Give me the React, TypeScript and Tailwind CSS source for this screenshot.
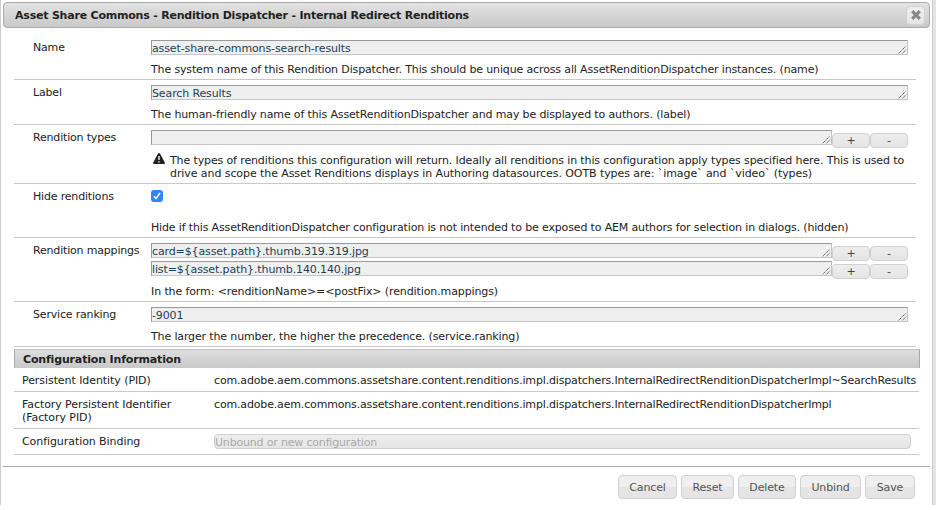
import React from "react";

function Grip() {
  return (
    <svg width="9" height="9" viewBox="0 0 9 9" className="absolute right-0 bottom-0" stroke="#555" strokeWidth="1" strokeDasharray="1.4 .6" fill="none">
      <path d="M.7 8.3 7.7 1.2M4.5 8.3 7.9 4.8" />
    </svg>
  );
}

function Field({ value, className = "" }: { value: string; className?: string }) {
  return (
    <div className={`relative h-[15px] border border-[#c4c4c4] border-t-[#999] border-l-[#999] bg-[#efefef] pt-px leading-[13px] tracking-[-0.12px] whitespace-nowrap text-[#1d4157] ${className}`}>
      {value}
      <Grip />
    </div>
  );
}

function SmallButton({ children }: { children: React.ReactNode }) {
  return (
    <button className="mt-[3px] flex h-[15px] w-[38px] items-center justify-center rounded-[4px] border border-[#d0d0d0] bg-linear-to-b from-[#ededed] to-[#e5e5e5] pt-px leading-[12px] text-[#444]">
      {children}
    </button>
  );
}

function ArrayField({ value }: { value: string }) {
  return (
    <div className="flex h-[18px] w-[757px]">
      <Field value={value} className="w-[681px]" />
      <SmallButton>+</SmallButton>
      <SmallButton>-</SmallButton>
    </div>
  );
}

function Row({ label, height, children }: { label: string; height: string; children: React.ReactNode }) {
  return (
    <div className={`flex border-b border-[#c8c8c8] pl-[19px] ${height}`}>
      <div className="w-[118px] shrink-0 pt-[6px] tracking-[-0.18px] whitespace-nowrap">{label}</div>
      <div className="flex-1 pt-[5px] whitespace-nowrap">{children}</div>
    </div>
  );
}

function InfoRow({ label, height, children }: { label: React.ReactNode; height: string; children: React.ReactNode }) {
  return (
    <div className={`flex w-[905px] border-b border-[#c8c8c8] pl-2 whitespace-nowrap ${height}`}>
      <div className="w-[192px] shrink-0 pt-[6px] tracking-[-0.07px]">{label}</div>
      {children}
    </div>
  );
}

const actions = [
  { name: "Cancel", width: "w-[59px]" },
  { name: "Reset", width: "w-[53px]" },
  { name: "Delete", width: "w-[58px]" },
  { name: "Unbind", width: "w-[61px]" },
  { name: "Save", width: "w-[50px]" },
];

export default function App() {
  return (
    <div className="h-[510px] w-[936px] overflow-hidden bg-white font-['DejaVu_Sans',Verdana,sans-serif] text-[11px] leading-[13px] tracking-[-0.14px] text-[#222]">
      <div className="h-[505px] bg-[#e4e4e4]">
        <div className="h-[505px] w-[933px] border-x border-[#ccc] bg-white pt-[2px] pl-[2px]">
          <div className="flex h-[26px] w-[927px] items-center justify-between rounded-[4px] border border-[#aaa] bg-linear-to-b from-[#e2e2e2] to-[#c9c9c9] pr-1 pl-[11px]">
            <h1 className="pt-px font-bold tracking-[-0.21px] whitespace-nowrap">Asset Share Commons - Rendition Dispatcher - Internal Redirect Renditions</h1>
            <button className="flex size-[19px] items-center justify-center rounded-[4px] border border-[#d3d3d3] bg-linear-to-b from-[#eee] to-[#e5e5e5]">
              <svg width="10" height="10" viewBox="0 0 10 10" stroke="#888" strokeWidth="3.2" fill="none">
                <path d="M1.2 1.2 8.8 8.8M8.8 1.2 1.2 8.8" />
              </svg>
            </button>
          </div>

          <div className="mt-[7px] ml-[11px] w-[902px]">
            <Row label="Name" height="h-[45px]">
              <Field value="asset-share-commons-search-results" className="w-[757px]" />
              <p className="mt-2">The system name of this Rendition Dispatcher. This should be unique across all AssetRenditionDispatcher instances. (name)</p>
            </Row>
            <Row label="Label" height="h-[45px]">
              <Field value="Search Results" className="w-[757px]" />
              <p className="mt-2">The human-friendly name of this AssetRenditionDispatcher and may be displayed to authors. (label)</p>
            </Row>
            <Row label="Rendition types" height="h-[59px]">
              <ArrayField value="" />
              <div className="mt-[6px] flex tracking-[-0.125px]">
                <svg width="12" height="11" viewBox="0 0 12 11" className="-mt-px mr-[5px] ml-[2px] shrink-0">
                  <path d="M5 .5Q6 -.4 7 .5L12 10 11.4 11H.6L0 10Z" fill="#222" />
                  <path d="M6 3V7M6 8.2V9.6" stroke="#ddd" strokeWidth="1.6" />
                </svg>
                <p>
                  The types of renditions this configuration will return. Ideally all renditions in this configuration apply types specified here. This is used to
                  <br />
                  <span className="tracking-[-0.08px]">drive and scope the Asset Renditions displays in Authoring datasources. OOTB types are: `image` and `video` (types)</span>
                </p>
              </div>
            </Row>
            <Row label="Hide renditions" height="h-[54px]">
              <div className="mt-px flex size-3 items-center justify-center rounded-[3px] bg-[#3584f7]">
                <svg width="8" height="8" viewBox="0 0 8 8" fill="none" stroke="white" strokeWidth="1.5">
                  <path d="M1 4.3 3 6.6 7 1" />
                </svg>
              </div>
              <p className="mt-[19px] tracking-[-0.15px]">Hide if this AssetRenditionDispatcher configuration is not intended to be exposed to AEM authors for selection in dialogs. (hidden)</p>
            </Row>
            <Row label="Rendition mappings" height="h-[64px]">
              <ArrayField value="card=${asset.path}.thumb.319.319.jpg" />
              <ArrayField value="list=${asset.path}.thumb.140.140.jpg" />
              <p className="mt-[6px] tracking-[-0.11px]">{"In the form: <renditionName>=<postFix> (rendition.mappings)"}</p>
            </Row>
            <Row label="Service ranking" height="h-[45px]">
              <Field value="-9001" className="w-[757px]" />
              <p className="mt-2">The larger the number, the higher the precedence. (service.ranking)</p>
            </Row>
          </div>

          <div className="mt-[2px] ml-[11px] w-[906px]">
            <h2 className="h-[19px] border border-b-0 border-[#aaa] border-t-[#c4c4c4] bg-linear-to-b from-[#dedede] to-[#c9c9c9] pt-[3px] pl-2 font-bold tracking-[-0.16px]">Configuration Information</h2>
            <InfoRow label="Persistent Identity (PID)" height="h-[24px]">
              <div className="pt-[6px] tracking-[-0.16px]">com.adobe.aem.commons.assetshare.content.renditions.impl.dispatchers.InternalRedirectRenditionDispatcherImpl~SearchResults</div>
            </InfoRow>
            <InfoRow label={<>Factory Persistent Identifier<br />(Factory PID)</>} height="h-[37px]">
              <div className="pt-[6px] tracking-[-0.16px]">com.adobe.aem.commons.assetshare.content.renditions.impl.dispatchers.InternalRedirectRenditionDispatcherImpl</div>
            </InfoRow>
            <InfoRow label="Configuration Binding" height="h-[26px]">
              <div className="mt-[5px] h-[15px] w-[697px] rounded-[4px] border border-[#d0d0d0] bg-linear-to-b from-[#ededed] to-[#e5e5e5] pt-px tracking-[-0.18px] text-[#aaa]">Unbound or new configuration</div>
            </InfoRow>
          </div>

          <div className="mt-[11px] flex w-[927px] justify-end gap-1 border-t border-[#aaa] pt-2 pr-[15px]">
            {actions.map((a) => (
              <button key={a.name} className={`h-[24px] rounded-[4px] border border-[#d0d0d0] bg-linear-to-b from-[#efefef] from-50% to-[#e5e5e5] to-50% pt-px text-[#555] ${a.width}`}>
                {a.name}
              </button>
            ))}
          </div>
        </div>
      </div>
    </div>
  );
}
